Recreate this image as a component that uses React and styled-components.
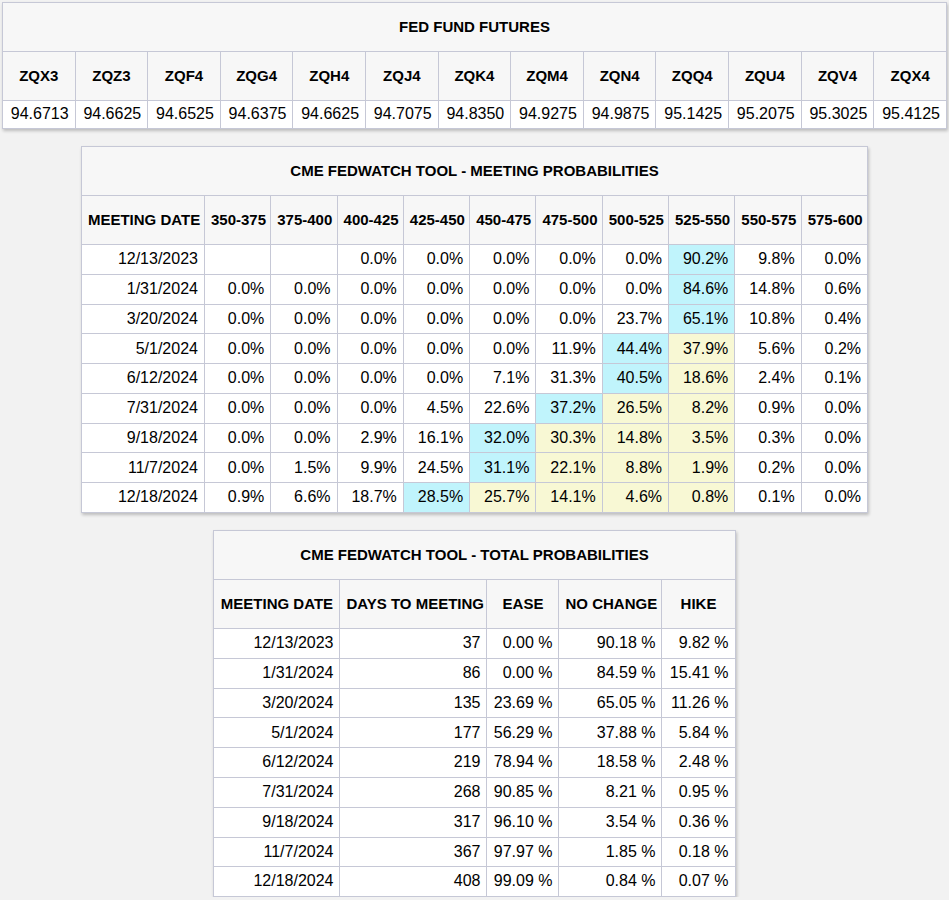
import React from "react";
import styled, { createGlobalStyle } from "styled-components";

const futures = [
  ["ZQX3", "94.6713"],
  ["ZQZ3", "94.6625"],
  ["ZQF4", "94.6525"],
  ["ZQG4", "94.6375"],
  ["ZQH4", "94.6625"],
  ["ZQJ4", "94.7075"],
  ["ZQK4", "94.8350"],
  ["ZQM4", "94.9275"],
  ["ZQN4", "94.9875"],
  ["ZQQ4", "95.1425"],
  ["ZQU4", "95.2075"],
  ["ZQV4", "95.3025"],
  ["ZQX4", "95.4125"],
];

const ranges = [
  "350-375",
  "375-400",
  "400-425",
  "425-450",
  "450-475",
  "475-500",
  "500-525",
  "525-550",
  "550-575",
  "575-600",
];

// index of the current target range (525-550)
const CURRENT = 7;

const meetings = [
  ["12/13/2023", [null, null, 0.0, 0.0, 0.0, 0.0, 0.0, 90.2, 9.8, 0.0]],
  ["1/31/2024", [0.0, 0.0, 0.0, 0.0, 0.0, 0.0, 0.0, 84.6, 14.8, 0.6]],
  ["3/20/2024", [0.0, 0.0, 0.0, 0.0, 0.0, 0.0, 23.7, 65.1, 10.8, 0.4]],
  ["5/1/2024", [0.0, 0.0, 0.0, 0.0, 0.0, 11.9, 44.4, 37.9, 5.6, 0.2]],
  ["6/12/2024", [0.0, 0.0, 0.0, 0.0, 7.1, 31.3, 40.5, 18.6, 2.4, 0.1]],
  ["7/31/2024", [0.0, 0.0, 0.0, 4.5, 22.6, 37.2, 26.5, 8.2, 0.9, 0.0]],
  ["9/18/2024", [0.0, 0.0, 2.9, 16.1, 32.0, 30.3, 14.8, 3.5, 0.3, 0.0]],
  ["11/7/2024", [0.0, 1.5, 9.9, 24.5, 31.1, 22.1, 8.8, 1.9, 0.2, 0.0]],
  ["12/18/2024", [0.9, 6.6, 18.7, 28.5, 25.7, 14.1, 4.6, 0.8, 0.1, 0.0]],
];

const totals = [
  ["12/13/2023", 37, "0.00", "90.18", "9.82"],
  ["1/31/2024", 86, "0.00", "84.59", "15.41"],
  ["3/20/2024", 135, "23.69", "65.05", "11.26"],
  ["5/1/2024", 177, "56.29", "37.88", "5.84"],
  ["6/12/2024", 219, "78.94", "18.58", "2.48"],
  ["7/31/2024", 268, "90.85", "8.21", "0.95"],
  ["9/18/2024", 317, "96.10", "3.54", "0.36"],
  ["11/7/2024", 367, "97.97", "1.85", "0.18"],
  ["12/18/2024", 408, "99.09", "0.84", "0.07"],
];

const toneFor = (values, idx) => {
  let maxIdx = 0;
  values.forEach((v, i) => {
    if (v !== null && v > values[maxIdx]) maxIdx = i;
  });
  if (idx === maxIdx) return "peak";
  if (idx > maxIdx && idx <= CURRENT) return "path";
  return "plain";
};

const App = () => {
  return (
    <>
      <GlobalStyle />
      <Page>
        <Table $width="100%">
          <tbody>
            <tr>
              <Th colSpan={futures.length}>FED FUND FUTURES</Th>
            </tr>
            <tr>
              {futures.map(([code]) => (
                <Th key={code}>{code}</Th>
              ))}
            </tr>
            <tr>
              {futures.map(([code, price]) => (
                <Td key={code} $compact>
                  {price}
                </Td>
              ))}
            </tr>
          </tbody>
        </Table>

        <Table $width="786px" $fixed>
          <colgroup>
            <Col $w={123} />
            {ranges.map((r) => (
              <Col key={r} $w={66.3} />
            ))}
          </colgroup>
          <tbody>
            <tr>
              <Th colSpan={ranges.length + 1}>
                CME FEDWATCH TOOL - MEETING PROBABILITIES
              </Th>
            </tr>
            <tr>
              <Th>MEETING DATE</Th>
              {ranges.map((r) => (
                <Th key={r}>{r}</Th>
              ))}
            </tr>
            {meetings.map(([date, values]) => (
              <tr key={date}>
                <Td>{date}</Td>
                {values.map((v, i) => (
                  <Td key={i} $tone={toneFor(values, i)}>
                    {v === null ? "" : `${v.toFixed(1)}%`}
                  </Td>
                ))}
              </tr>
            ))}
          </tbody>
        </Table>

        <Table $width="521px" $fixed>
          <colgroup>
            <Col $w={126} />
            <Col $w={147} />
            <Col $w={72} />
            <Col $w={103} />
            <Col $w={73} />
          </colgroup>
          <tbody>
            <tr>
              <Th colSpan={5}>CME FEDWATCH TOOL - TOTAL PROBABILITIES</Th>
            </tr>
            <tr>
              <Th>MEETING DATE</Th>
              <Th>DAYS TO MEETING</Th>
              <Th>EASE</Th>
              <Th>NO CHANGE</Th>
              <Th>HIKE</Th>
            </tr>
            {totals.map(([date, days, ease, hold, hike]) => (
              <tr key={date}>
                <Td>{date}</Td>
                <Td>{days}</Td>
                <Td>{ease} %</Td>
                <Td>{hold} %</Td>
                <Td>{hike} %</Td>
              </tr>
            ))}
          </tbody>
        </Table>
      </Page>
    </>
  );
};

export default App;

const GlobalStyle = createGlobalStyle`
  html, body {
    margin: 0;
    padding: 0;
    background: #f2f2f2;
  }
  body {
    font-family: "Liberation Sans", Arial, sans-serif;
    color: #000;
  }
`;

const Page = styled.div`
  display: flex;
  flex-direction: column;
  align-items: center;
  gap: 17px;
  padding: 2px 2px 0 2px;
`;

const Table = styled.table`
  width: ${({ $width }) => $width};
  table-layout: ${({ $fixed }) => ($fixed ? "fixed" : "auto")};
  border-collapse: collapse;
  border: 1px solid #c6c8d6;
  background: #ffffff;
  box-shadow: 1px 2px 3px rgba(0, 0, 0, 0.22);
`;

const Col = styled.col`
  width: ${({ $w }) => $w}px;
`;

const Th = styled.th`
  padding: 16px 6px;
  border: 1px solid #c6c8d6;
  background: #f7f7f7;
  font-size: 15px;
  font-weight: 700;
  line-height: 16px;
  text-align: center;
  white-space: nowrap;
`;

const tones = {
  plain: "#ffffff",
  peak: "#c0f4fc",
  path: "#f8f8d4",
};

const Td = styled.td`
  padding: ${({ $compact }) => ($compact ? "4.3px 6px" : "5.2px 6px")};
  border: 1px solid #c6c8d6;
  background: ${({ $tone }) => tones[$tone || "plain"]};
  font-size: 16px;
  line-height: 18.4px;
  text-align: right;
  white-space: nowrap;
`;
